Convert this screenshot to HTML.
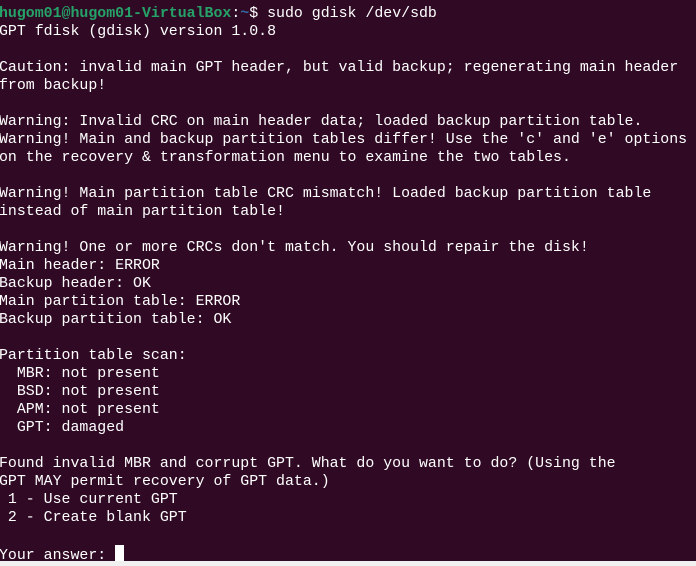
<!DOCTYPE html>
<html><head><meta charset="utf-8"><style>
html,body{margin:0;padding:0;width:696px;height:566px;overflow:hidden;background:#300a24;}
pre{position:absolute;left:-1px;top:5px;margin:0;font-family:"Liberation Mono",monospace;font-size:14.9px;line-height:18px;color:#ffffff;white-space:pre;}
.g{color:#26a269;font-weight:bold}.b{color:#3465a4;font-weight:bold}
.cur{display:inline-block;width:9px;height:18px;background:#fff;vertical-align:-4px}
.bar{position:absolute;left:0;top:561px;width:696px;height:5px;background:#f0f0f0}
</style></head><body>
<pre><span class="g">hugom01@hugom01-VirtualBox</span>:<span class="b">~</span>$ sudo gdisk /dev/sdb
GPT fdisk (gdisk) version 1.0.8

Caution: invalid main GPT header, but valid backup; regenerating main header
from backup!

Warning: Invalid CRC on main header data; loaded backup partition table.
Warning! Main and backup partition tables differ! Use the 'c' and 'e' options
on the recovery &amp; transformation menu to examine the two tables.

Warning! Main partition table CRC mismatch! Loaded backup partition table
instead of main partition table!

Warning! One or more CRCs don't match. You should repair the disk!
Main header: ERROR
Backup header: OK
Main partition table: ERROR
Backup partition table: OK

Partition table scan:
  MBR: not present
  BSD: not present
  APM: not present
  GPT: damaged

Found invalid MBR and corrupt GPT. What do you want to do? (Using the
GPT MAY permit recovery of GPT data.)
 1 - Use current GPT
 2 - Create blank GPT

Your answer: <span class="cur"></span></pre>
<div class="bar"></div>
</body></html>
